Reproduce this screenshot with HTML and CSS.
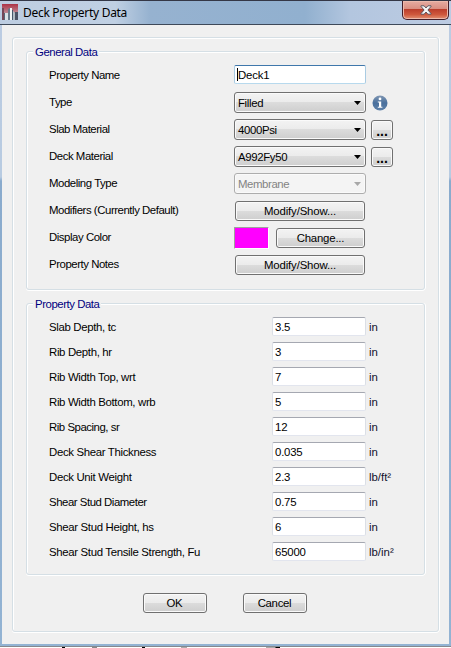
FILE: index.html
```html
<!DOCTYPE html>
<html lang="en">
<head>
<meta charset="utf-8">
<title>Deck Property Data</title>
<link rel="stylesheet" href="styles.css">
</head>
<body>
<div class="window">
  <header class="titlebar">
    <svg class="app-icon" width="16" height="16" viewBox="0 0 16 16">
      <defs><linearGradient id="sky" x1="0" y1="0" x2="0" y2="1"><stop offset="0" stop-color="#ad3346"/><stop offset=".55" stop-color="#bd8792"/><stop offset="1" stop-color="#4d5365"/></linearGradient></defs>
      <rect width="16" height="16" fill="url(#sky)"/>
      <path d="M0 4h2v12H0z" fill="#754657"/>
      <path d="M3 9h3v7H3z" fill="#d9e2e7"/><path d="M2 9h1v7H2z" fill="#586475"/>
      <path d="M6 5l2-1v12H6z" fill="#68798a"/><path d="M8 4h2v12H8z" fill="#f0f3f5"/>
      <path d="M10 6h1v10h-1z" fill="#45566a"/><path d="M11 7l2 2v7h-2z" fill="#aebbc5"/><path d="M13 8h3v8h-3z" fill="#4a5265"/>
    </svg>
    <h1 class="title">Deck Property Data</h1>
    <button class="close" aria-label="Close"><svg width="12" height="10" viewBox="0 0 12 10"><path d="M1 .8h3.1L6 3 7.9.8H11v.7L7.9 5 11 8.5v.7H7.9L6 7 4.1 9.2H1v-.7L4.1 5 1 1.5z" fill="#f6f6f6" stroke="#504b56" stroke-width=".9"/></svg></button>
  </header>
  <main class="client">
    <div class="panel">
      <fieldset class="group general">
        <legend>General Data</legend>
        <div class="row"><label>Property Name</label><span class="input focused"><i class="caret"></i>Deck1</span></div>
        <div class="row"><label>Type</label><span class="combo">Filled</span>
          <svg class="info" width="16" height="16" viewBox="0 0 16 16"><defs><linearGradient id="ball" x1="0" y1="0" x2="0" y2="1"><stop offset="0" stop-color="#8197b3"/><stop offset=".5" stop-color="#49709d"/><stop offset="1" stop-color="#5f82aa"/></linearGradient></defs><circle cx="8" cy="8" r="7.5" fill="url(#ball)"/><circle cx="8" cy="3.9" r="1.4" fill="#fff"/><path d="M5.8 6.5h3.4v5.2h1.2v1H5.8v-1H7V7.5H5.8z" fill="#fff"/></svg></div>
        <div class="row"><label>Slab Material</label><span class="combo">4000Psi</span><button class="btn more"><b>...</b></button></div>
        <div class="row"><label>Deck Material</label><span class="combo">A992Fy50</span><button class="btn more"><b>...</b></button></div>
        <div class="row"><label>Modeling Type</label><span class="combo disabled">Membrane</span></div>
        <div class="row"><label>Modifiers (Currently Default)</label><button class="btn modify">Modify/Show...</button></div>
        <div class="row"><label>Display Color</label><span class="swatch"></span><button class="btn change">Change...</button></div>
        <div class="row"><label>Property Notes</label><button class="btn modify">Modify/Show...</button></div>
      </fieldset>
      <fieldset class="group property">
        <legend>Property Data</legend>
        <div class="row"><label>Slab Depth, tc</label><span class="input">3.5</span><span class="unit">in</span></div>
        <div class="row"><label>Rib Depth, hr</label><span class="input">3</span><span class="unit">in</span></div>
        <div class="row"><label>Rib Width Top, wrt</label><span class="input">7</span><span class="unit">in</span></div>
        <div class="row"><label>Rib Width Bottom, wrb</label><span class="input">5</span><span class="unit">in</span></div>
        <div class="row"><label class="tight">Rib Spacing, sr</label><span class="input">12</span><span class="unit">in</span></div>
        <div class="row"><label>Deck Shear Thickness</label><span class="input">0.035</span><span class="unit">in</span></div>
        <div class="row"><label>Deck Unit Weight</label><span class="input">2.3</span><span class="unit">lb/ft²</span></div>
        <div class="row"><label class="tight">Shear Stud Diameter</label><span class="input">0.75</span><span class="unit">in</span></div>
        <div class="row"><label>Shear Stud Height, hs</label><span class="input">6</span><span class="unit">in</span></div>
        <div class="row"><label>Shear Stud Tensile Strength, Fu</label><span class="input">65000</span><span class="unit">lb/in²</span></div>
      </fieldset>
      <footer class="actions"><button class="btn">OK</button><button class="btn">Cancel</button></footer>
    </div>
  </main>
</div>
<div class="behind"></div>
</body>
</html>
```

FILE: styles.css
```css
* { box-sizing: border-box; }
body {
  margin: 0;
  width: 451px;
  height: 648px;
  overflow: hidden;
  background: #fff;
  color: #000;
  font: 11.4px/14px "Liberation Sans", Arial, sans-serif;
  letter-spacing: -0.45px;
}
button { font: inherit; letter-spacing: inherit; color: inherit; padding: 0; }

.window {
  height: 647px;
  border-bottom: 1px solid #85898e;
  background: linear-gradient(#bccce2 0, #b8cbe1 177px, #8aabcd 181px, #93b3d3 100%);
}
.titlebar {
  display: flex;
  height: 25px;
  padding-left: 2px;
  border-top: 1px solid #343746;
  border-bottom: 1px solid #3e4959;
  background: linear-gradient(90deg, #bdcde1 0, #c0d0e3 115px, #96b2d0 150px, #91b0cf 305px, #b3c6df 350px, #bccbe2 100%);
}
.app-icon { margin-top: 3px; }
.title {
  margin: 4px 0 0 5px;
  font: 12px/16px "Noto Sans", sans-serif;
  letter-spacing: -0.29px;
}
.close {
  display: flex;
  align-items: center;
  justify-content: center;
  width: 47px;
  height: 19px;
  margin-left: auto;
  margin-right: 2px;
  border: 1px solid #431e29;
  border-top: 0;
  border-radius: 0 0 5px 5px;
  background: linear-gradient(#e6aca2 0, #d98d80 45%, #bb3d2b 46%, #cf583d 75%, #e29173 100%);
  box-shadow: inset 0 0 0 1px #ecb9ac;
}
.client {
  height: 619px;
  margin: 0 2px;
  padding: 12px 10px 0;
  background: #f0f0f0;
}
.panel {
  width: 427px;
  height: 595px;
  padding: 13px 13px 0;
  border: 1px solid #d5dfe5;
  border-radius: 3px;
  box-shadow: inset 1px 1px #fff, 0 1px #fff, 1px 0 #fff;
}
.group {
  position: relative;
  width: 399px;
  min-width: 0;
  margin: 0;
  padding: 10px 0 0 22px;
  border: 1px solid #d5dfe5;
  border-radius: 3px;
  box-shadow: inset 1px 1px #fff, 0 1px #fff, 1px 0 #fff;
}
.general { height: 239px; }
.property { height: 272px; margin-top: 13px; }
.group legend {
  position: absolute;
  top: -7px;
  left: 6px;
  padding: 0 2px;
  background: #f0f0f0;
  color: #00007f;
}
.row { display: flex; align-items: flex-start; height: 27px; }
.property .row { height: 25px; }
.row label { width: 185px; margin-top: 6px; white-space: nowrap; }
.property .row label { width: 223px; letter-spacing: -0.33px; }
.property .row .tight { letter-spacing: -0.46px; }
.input {
  width: 132px;
  height: 19px;
  margin-top: 3px;
  padding: 2px 0 0 2px;
  border: 1px solid #e2e5ee;
  border-top-color: #a5a8b1;
  border-left-color: #dbdfe6;
  border-right-color: #dbdfe6;
  border-radius: 2px;
  background: #fff;
  letter-spacing: -0.2px;
}
.property .input { width: 94px; }
.input.focused { position: relative; padding-left: 3px; border-color: #3f77ab #a9cbe2 #b7d9ed #a9cbe2; }
.caret { position: absolute; left: 2px; top: 2px; width: 1px; height: 13px; background: #000; }
.unit { margin: 6px 0 0 3px; color: #10102c; letter-spacing: 0; }
.combo, .btn {
  border: 1px solid #707070;
  border-radius: 3px;
  background: linear-gradient(#f3f3f3 0, #ebebeb 49%, #dcdcdc 50%, #cecece 100%);
  box-shadow: inset 0 0 0 1px #fafafa;
}
.combo {
  display: flex;
  justify-content: space-between;
  width: 132px;
  height: 21px;
  margin-top: 3px;
  padding: 3px 4px 0 3px;
  letter-spacing: -0.35px;
}
.combo::after {
  content: "";
  width: 7px;
  height: 4px;
  margin-top: 5px;
  background: currentColor;
  clip-path: polygon(0 0, 100% 0, 50% 100%);
}
.combo.disabled { background: #f4f4f4; border-color: #adadad; color: #838383; letter-spacing: -0.4px; }
.combo.disabled::after { background: #a8a8a8; }
.info { margin: 6px 0 0 6px; }
.btn { height: 20px; margin-top: 4px; text-align: center; line-height: 16px; }
.modify { width: 130px; margin-left: 1px; letter-spacing: -0.15px; }
.change { width: 89px; margin-left: 7px; letter-spacing: -0.2px; }
.more { width: 22px; margin-left: 5px; padding-top: 2px; font-size: 14px; letter-spacing: 0; }
.swatch {
  width: 35px;
  height: 22px;
  margin-top: 3px;
  border: 1px solid #a0a0a0;
  border-right-color: #fff;
  border-bottom-color: #fff;
  background: #f0f;
}
.actions { display: flex; justify-content: center; gap: 36px; padding: 14px 2px 0 0; }
.actions .btn { width: 64px; letter-spacing: -0.3px; }
.behind {
  height: 1px;
  background: linear-gradient(90deg, #fff 62px, #000 62px 65px, #fff 65px 92px, #888 92px 97px, #fff 97px 142px, #000 142px 145px, #fff 145px 181px, #aaa 181px 187px, #fff 187px 266px, #aaa 266px 275px, #000 276px 280px, #fff 280px);
}
```
